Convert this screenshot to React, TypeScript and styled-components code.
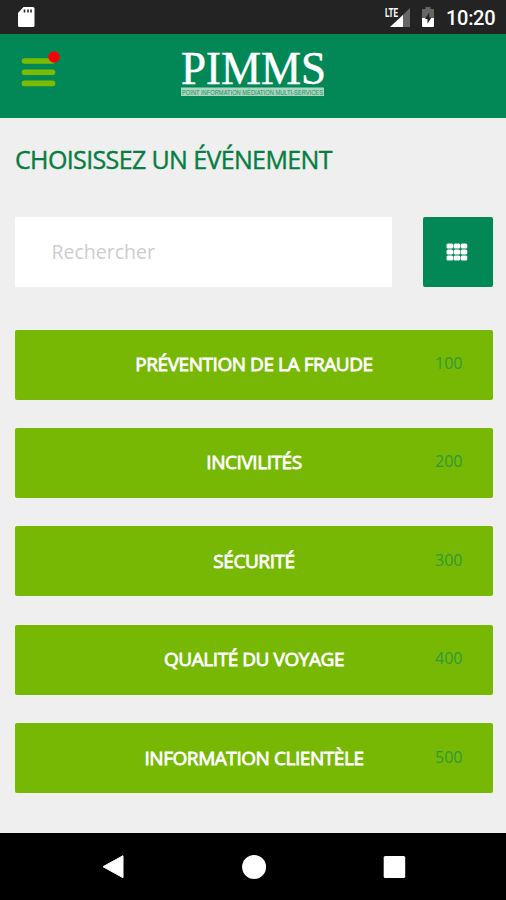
import React from "react";
import styled, { createGlobalStyle } from "styled-components";

const Global = createGlobalStyle`
  * { box-sizing: border-box; }
  body { margin: 0; background: #efefef; font-family: "Open Sans", sans-serif; }
  button, input { font: inherit; border: 0; margin: 0; padding: 0; }
`;

const Screen = styled.div`
  width: 506px;
  height: 900px;
  display: flex;
  flex-direction: column;
  background: #efefef;
  overflow: hidden;
`;

const StatusBar = styled.div`
  height: 34px;
  flex: none;
  display: flex;
  align-items: center;
  justify-content: space-between;
  padding: 0 10px 0 16px;
  background: #232323;
`;

const StatusGroup = styled.div`
  display: flex;
  align-items: center;
`;

const Clock = styled.span`
  width: 50px;
  margin-left: 11px;
  font: 500 20px/34px Roboto, sans-serif;
  letter-spacing: -0.3px;
  white-space: nowrap;
  color: #fff;
  padding-top: 2px;
`;

const Header = styled.header`
  height: 84px;
  flex: none;
  display: grid;
  grid-template-columns: 1fr auto 1fr;
  align-items: start;
  background: #028856;
`;

const MenuButton = styled.button`
  justify-self: start;
  margin: 16px 0 0 21px;
  width: 40px;
  height: 40px;
  background: none;
`;

const LogoMark = styled.svg`
  display: block;
  margin-top: 4px;
`;

const Main = styled.main`
  flex: 1;
  padding: 22px 13px 0 15px;
`;

const Title = styled.h1`
  margin: 0;
  height: 38px;
  font-size: 25px;
  line-height: 38px;
  font-weight: 400;
  letter-spacing: -0.63px;
  white-space: nowrap;
  color: #087d42;
  -webkit-text-stroke: 0.4px #087d42;
`;

const SearchRow = styled.div`
  display: flex;
  justify-content: space-between;
  height: 70px;
  margin-top: 39px;
`;

const SearchInput = styled.input`
  width: 377px;
  padding: 0 37px 2px 36.5px;
  background: #fff;
  font-size: 19.5px;
  outline: none;
  &::placeholder { color: #cdcdcd; opacity: 1; }
`;

const GridButton = styled.button`
  width: 70.5px;
  display: flex;
  align-items: center;
  justify-content: center;
  padding: 0 1px 1px 0;
  border-radius: 2px;
  background: #028856;
`;

const EventList = styled.div`
  display: flex;
  flex-direction: column;
  gap: 28.4px;
  margin-top: 42.6px;
`;

const EventButton = styled.button`
  height: 70px;
  flex: none;
  display: grid;
  grid-template-columns: 1fr auto 1fr;
  align-items: center;
  border-radius: 2px;
  background: #76b803;
`;

const EventLabel = styled.span`
  grid-column: 2;
  font-size: 19px;
  letter-spacing: -0.44px;
  margin-bottom: 1px;
  color: #fff;
  -webkit-text-stroke: 0.8px #fff;
  white-space: nowrap;
`;

const EventCode = styled.span`
  justify-self: end;
  margin: 0 30.5px 3px 0;
  font-size: 16px;
  color: #2f9a3a;
`;

const NavBar = styled.nav`
  height: 67px;
  flex: none;
  display: flex;
  justify-content: space-between;
  align-items: center;
  padding: 0 99px 0 100px;
  background: #000;
`;

const NavButton = styled.button`
  width: 26px;
  height: 26px;
  background: none;
`;

const NavGlyph = styled.svg`
  display: block;
  fill: #fff;
`;

const StatusIcon = styled.svg<{ $gap?: number }>`
  margin-right: ${({ $gap }) => $gap ?? 0}px;
`;

const events = [
  { label: "PRÉVENTION DE LA FRAUDE", code: 100 },
  { label: "INCIVILITÉS", code: 200 },
  { label: "SÉCURITÉ", code: 300 },
  { label: "QUALITÉ DU VOYAGE", code: 400 },
  { label: "INFORMATION CLIENTÈLE", code: 500 },
];

const SdCard = () => (
  <StatusIcon width="20" height="22" viewBox="0 0 20 22">
    <path d="M7.5 1H17a1.5 1.5 0 0 1 1.5 1.5V19.5a1.5 1.5 0 0 1-1.5 1.5H3.5a1.5 1.5 0 0 1-1.5-1.5V7z" fill="#fff" />
    <path d="M8.5 3.5v3M12 3.5v3M15 3.5v3" stroke="#232323" strokeWidth="1.6" />
  </StatusIcon>
);

const Signal = () => (
  <StatusIcon $gap={9} width="28" height="24" viewBox="0 0 28 24">
    <path d="M26 3v19H6z" fill="#666" />
    <path d="M19 10v12H6z" fill="#fff" />
    <path d="M0 0h14.500v13H0z" fill="#232323" />
    <text x="1" y="11.5" fontFamily="Roboto" fontSize="12" fontWeight="700" fill="#fff" textLength="13" lengthAdjust="spacingAndGlyphs">LTE</text>
  </StatusIcon>
);

const Battery = () => (
  <StatusIcon width="14" height="22" viewBox="0 0 14 22">
    <path d="M4.5 1h5v2H12a1 1 0 0 1 1 1v8H1V4a1 1 0 0 1 1-1h2.5z" fill="#666" />
    <path d="M1 12h12v8a1 1 0 0 1-1 1H2a1 1 0 0 1-1-1z" fill="#fff" />
    <path d="M8.2 6.500L4 13H6.500V17.500L10.500 11.500H8.200z" fill="#232323" />
  </StatusIcon>
);

const MenuIcon = () => (
  <svg width="40" height="40" viewBox="0 0 40 40" display="block">
    <path d="M3.5 11H31.5M3.5 22.2H31.5M3.5 33.4H31.5" stroke="#7bbc02" strokeWidth="5.6" strokeLinecap="round" />
    <circle cx="33" cy="7" r="5.7" fill="#fb0007" />
  </svg>
);

const Logo = () => (
  <LogoMark width="148" height="66" viewBox="0 0 148 66">
    <text x="2" y="46.3" fontFamily="Liberation Serif" fontSize="46.5" fill="#fff" stroke="#fff" strokeWidth="0.5" textLength="145" lengthAdjust="spacingAndGlyphs">PIMMS</text>
    <rect x="2" y="49.5" width="143" height="8.5" fill="#a9d6bf" />
    <text x="3" y="56.5" fontFamily="Liberation Sans" fontSize="7.5" fill="#1f9263" textLength="141" lengthAdjust="spacingAndGlyphs">POINT INFORMATION MÉDIATION MULTI-SERVICES</text>
  </LogoMark>
);

const GridIcon = () => (
  <svg width="22" height="18" viewBox="0 0 22 18">
    {[0, 6, 12].map((y) =>
      [0, 7.1, 14.2].map((x) => (
        <rect key={`${x}-${y}`} x={x + 0.5} y={y + 0.5} width="6.6" height="5" rx="1.5" fill="#fff" />
      ))
    )}
  </svg>
);

export default function App() {
  return (
    <Screen>
      <Global />
      <StatusBar>
        <SdCard />
        <StatusGroup>
          <Signal />
          <Battery />
          <Clock>10:20</Clock>
        </StatusGroup>
      </StatusBar>
      <Header>
        <MenuButton aria-label="Menu"><MenuIcon /></MenuButton>
        <Logo />
      </Header>
      <Main>
        <Title>CHOISISSEZ UN ÉVÉNEMENT</Title>
        <SearchRow>
          <SearchInput placeholder="Rechercher" />
          <GridButton aria-label="Grille"><GridIcon /></GridButton>
        </SearchRow>
        <EventList>
          {events.map((e) => (
            <EventButton key={e.code}>
              <EventLabel>{e.label}</EventLabel>
              <EventCode>{e.code}</EventCode>
            </EventButton>
          ))}
        </EventList>
      </Main>
      <NavBar>
        <NavButton aria-label="Retour">
          <NavGlyph width="26" height="26" viewBox="0 0 26 26"><path d="M3 12.700L23 1.700v22z" stroke="#fff" strokeLinejoin="round" /></NavGlyph>
        </NavButton>
        <NavButton aria-label="Accueil">
          <NavGlyph width="26" height="26" viewBox="0 0 26 26"><circle cx="13.1" cy="13" r="12" /></NavGlyph>
        </NavButton>
        <NavButton aria-label="Applications">
          <NavGlyph width="26" height="26" viewBox="0 0 26 26"><rect x="2.7" y="2" width="21.5" height="22" rx="1.5" /></NavGlyph>
        </NavButton>
      </NavBar>
    </Screen>
  );
}
